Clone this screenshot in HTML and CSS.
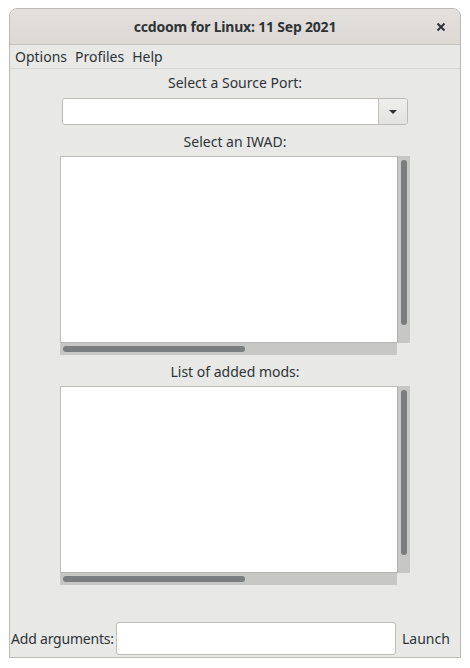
FILE: index.html
```html
<!DOCTYPE html>
<html>
<head>
<meta charset="utf-8">
<link rel="stylesheet" href="styles.css">
</head>
<body>
<div class="window">
  <div class="titlebar">
    <span class="title">ccdoom for Linux: 11 Sep 2021</span>
    <span class="close">
      <svg width="10" height="10" viewBox="0 0 10 10"><path d="M1.5 1.5 L8.5 8.5 M8.5 1.5 L1.5 8.5" stroke="#2e3436" stroke-width="2" stroke-linecap="butt"/></svg>
    </span>
  </div>
  <div class="menubar">
    <span class="menu-item">Options</span>
    <span class="menu-item">Profiles</span>
    <span class="menu-item">Help</span>
  </div>
  <div class="content">
    <div class="label label-first">Select a Source Port:</div>
    <div class="combo">
      <div class="combo-entry"></div>
      <div class="combo-btn">
        <svg width="10" height="6" viewBox="0 0 10 6"><path d="M1 1 L9 1 L5 5 Z" fill="#2e3436"/></svg>
      </div>
    </div>
    <div class="label">Select an IWAD:</div>
    <div class="list">
      <div class="list-view"></div>
      <div class="vscroll"><div class="vthumb"></div></div>
      <div class="hscroll"><div class="hthumb"></div></div>
      <div class="corner"></div>
    </div>
    <div class="label">List of added mods:</div>
    <div class="list">
      <div class="list-view"></div>
      <div class="vscroll"><div class="vthumb"></div></div>
      <div class="hscroll"><div class="hthumb"></div></div>
      <div class="corner"></div>
    </div>
    <div class="spacer"></div>
    <div class="bottom-row">
      <span class="args-label">Add arguments:</span>
      <div class="args-input"></div>
      <span class="launch">Launch</span>
    </div>
  </div>
</div>
</body>
</html>
```
FILE: styles.css
```css
html, body {
  margin: 0;
  padding: 0;
  background: #ffffff;
}
body {
  font-family: "Noto Sans", "DejaVu Sans", sans-serif;
  color: #2e3436;
  font-size: 14px;
}
.window {
  margin: 8px 0 0 9px;
  width: 450px;
  height: 648px;
  border: 1px solid #bdbab6;
  border-radius: 8px 8px 0 0;
  background: #e8e8e7;
  display: flex;
  flex-direction: column;
  overflow: hidden;
}
.titlebar {
  height: 35px;
  flex: none;
  background: linear-gradient(#e3e0dd, #dcd9d5);
  border-bottom: 1px solid #c7c3bf;
  display: flex;
  align-items: center;
  justify-content: center;
  position: relative;
}
.title {
  font-weight: bold;
  font-size: 14px;
  letter-spacing: -0.2px;
}
.close {
  position: absolute;
  right: 14px;
  top: 13px;
  width: 10px;
  height: 10px;
  display: flex;
}
.menubar {
  height: 23px;
  flex: none;
  border-bottom: 1px solid #d6d5d3;
  display: flex;
  align-items: center;
  padding-left: 5px;
  gap: 8px;
}
.menu-item {
  font-size: 14px;
  line-height: 20px;
}
.content {
  flex: 1;
  display: flex;
  flex-direction: column;
}
.label {
  height: 31px;
  line-height: 33px;
  text-align: center;
  font-size: 14px;
  flex: none;
}
.label-first {
  height: 29px;
  line-height: 28px;
}
.combo {
  margin-left: 52px;
  width: 346px;
  height: 27px;
  flex: none;
  display: flex;
  border: 1px solid #bdbab6;
  border-radius: 3px;
  box-sizing: border-box;
  overflow: hidden;
  background: #ffffff;
}
.combo-entry {
  flex: 1;
  background: #ffffff;
}
.combo-btn {
  width: 28px;
  border-left: 1px solid #c3c0bc;
  background: linear-gradient(#eeeeed, #e2e2e0);
  display: flex;
  align-items: center;
  justify-content: center;
}
.list {
  margin-left: 50px;
  width: 350px;
  flex: none;
  display: grid;
  grid-template-columns: 337px 13px;
  grid-template-rows: 187px 12px;
}
.list-view {
  background: #ffffff;
  border: 1px solid #bdbdbb;
  border-right: none;
  border-bottom: 1px solid #b5b5b3;
}
.vscroll {
  background: #c7c8c6;
  border-left: 1px solid #b1b2b0;
  display: flex;
  justify-content: center;
  padding-top: 4px;
}
.vthumb {
  width: 6px;
  height: 165px;
  border-radius: 3px;
  background: #797d7d;
}
.hscroll {
  background: #c7c8c6;
  padding-left: 3px;
  display: flex;
  align-items: center;
}
.hthumb {
  width: 182px;
  height: 6px;
  border-radius: 3px;
  background: #797d7d;
}
.corner {
  background: transparent;
}
.spacer {
  flex: 1;
}
.bottom-row {
  height: 34px;
  margin-bottom: 2px;
  display: flex;
  align-items: center;
  flex: none;
}
.args-label {
  margin-left: 1px;
  width: 105px;
  flex: none;
  white-space: nowrap;
  font-size: 14px;
  letter-spacing: -0.2px;
}
.args-input {
  width: 280px;
  height: 33px;
  flex: none;
  box-sizing: border-box;
  border: 1px solid #bfbcb8;
  border-radius: 3px;
  background: #ffffff;
}
.launch {
  margin-left: 6px;
  white-space: nowrap;
  font-size: 14px;
}
```
